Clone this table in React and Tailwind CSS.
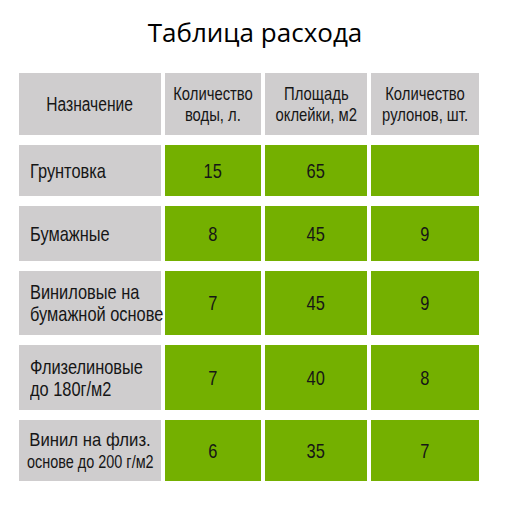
import React from 'react';

// Arial-metric font squeezed sideways, standing in for a condensed face
const sans = { fontFamily: '"Liberation Sans", Arial, sans-serif' };

const rows = [
  { name: ['Грунтовка'], h: 'h-[51px]', water: '15', area: '65', rolls: '' },
  { name: ['Бумажные'], h: 'h-[55px]', water: '8', area: '45', rolls: '9' },
  { name: ['Виниловые на', 'бумажной основе'], h: 'h-[64px]', water: '7', area: '45', rolls: '9' },
  { name: ['Флизелиновые', 'до 180г/м2'], h: 'h-[65px]', water: '7', area: '40', rolls: '8' },
];

const Narrow = ({ className = 'origin-center', children }) => (
  <span className={`block whitespace-nowrap scale-x-[0.78] ${className}`}>{children}</span>
);

const Cell = ({ className = '', children }) => (
  <div className={`flex flex-col items-center justify-center text-center ${className}`}>{children}</div>
);

const cols = 'grid grid-cols-[142px_96px_102px_108px] gap-x-1';

export default function App() {
  return (
    <div className="w-[510px] h-[510px] bg-white text-[#161616]">
      <div
        className="h-[73px] pt-[14px] text-center text-[26px] leading-[36px] text-black"
        style={{ fontFamily: '"Open Sans", "Noto Sans", sans-serif' }}
      >
        Таблица расхода
      </div>
      <div className="pl-[19px] flex flex-col gap-y-[10px]" style={sans}>
        <div className={`${cols} h-[62px] text-[19px] leading-[21px]`}>
          <Cell className="bg-[#cfcdce] text-[20px]"><Narrow>Назначение</Narrow></Cell>
          <Cell className="bg-[#cfcdce]"><Narrow>Количество</Narrow><Narrow>воды, л.</Narrow></Cell>
          <Cell className="bg-[#cfcdce]"><Narrow>Площадь</Narrow><Narrow>оклейки, м2</Narrow></Cell>
          <Cell className="bg-[#cfcdce]"><Narrow>Количество</Narrow><Narrow>рулонов, шт.</Narrow></Cell>
        </div>
        {rows.map((r) => (
          <div key={r.name[0]} className={`${cols} ${r.h} text-[21px] leading-[22px]`}>
            <div className="bg-[#cfcdce] flex flex-col justify-center pl-[11px]">
              {r.name.map((line) => (
                <Narrow key={line} className="origin-left">{line}</Narrow>
              ))}
            </div>
            <Cell className="bg-[#74b000]"><Narrow>{r.water}</Narrow></Cell>
            <Cell className="bg-[#74b000]"><Narrow>{r.area}</Narrow></Cell>
            <Cell className="bg-[#74b000]"><Narrow>{r.rolls}</Narrow></Cell>
          </div>
        ))}
        <div className={`${cols} h-[61px] text-[21px] leading-[22px]`}>
          <Cell className="bg-[#cfcdce]">
            <span className="block whitespace-nowrap text-[19px] scale-x-[0.88] origin-center">Винил на флиз.</span>
            <span className="block whitespace-nowrap text-[19px] scale-x-[0.76] origin-center">основе до 200 г/м2</span>
          </Cell>
          <Cell className="bg-[#74b000]"><Narrow>6</Narrow></Cell>
          <Cell className="bg-[#74b000]"><Narrow>35</Narrow></Cell>
          <Cell className="bg-[#74b000]"><Narrow>7</Narrow></Cell>
        </div>
      </div>
    </div>
  );
}
